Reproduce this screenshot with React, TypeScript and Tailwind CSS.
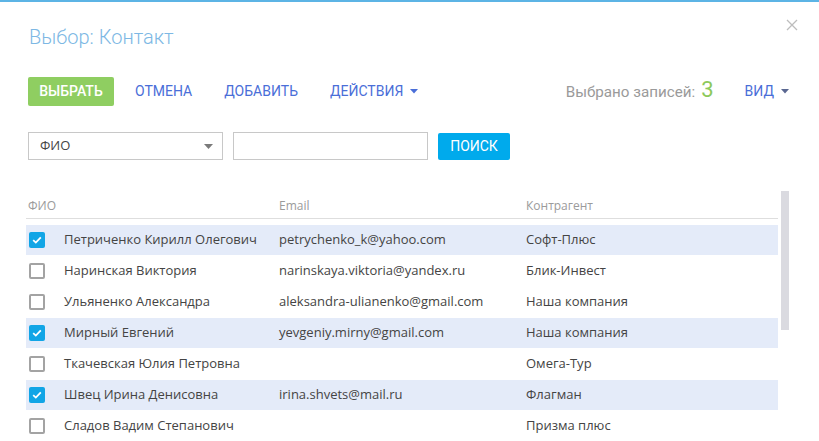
import React from "react"

type Contact = {
  name: string
  email: string
  account: string
  selected: boolean
}

const contacts: Contact[] = [
  { name: "Петриченко Кирилл Олегович", email: "petrychenko_k@yahoo.com", account: "Софт-Плюс", selected: true },
  { name: "Наринская Виктория", email: "narinskaya.viktoria@yandex.ru", account: "Блик-Инвест", selected: false },
  { name: "Ульяненко Александра", email: "aleksandra-ulianenko@gmail.com", account: "Наша компания", selected: false },
  { name: "Мирный Евгений", email: "yevgeniy.mirny@gmail.com", account: "Наша компания", selected: true },
  { name: "Ткачевская Юлия Петровна", email: "", account: "Омега-Тур", selected: false },
  { name: "Швец Ирина Денисовна", email: "irina.shvets@mail.ru", account: "Флагман", selected: true },
  { name: "Сладов Вадим Степанович", email: "", account: "Призма плюс", selected: false },
]

const Caret = ({ color }: { color: string }) => (
  <svg width="8" height="5" viewBox="0 0 8 5" className="ml-[7px]">
    <path d="M0 0 L8 0 L4 4.5 Z" fill={color} />
  </svg>
)

const Checkbox = ({ checked }: { checked: boolean }) =>
  checked ? (
    <div className="w-[16px] h-[16px] rounded-[2px] bg-[#11a5e6] flex items-center justify-center">
      <svg width="10" height="8" viewBox="0 0 10 8">
        <path d="M1.2 4.2 L3.8 6.6 L8.8 1.4" stroke="white" strokeWidth="1.8" fill="none" />
      </svg>
    </div>
  ) : (
    <div className="w-[16px] h-[16px] rounded-[2px] border-2 border-[#a3a3a3] bg-white" />
  )

const App: React.FC = () => {
  return (
    <div className="relative w-[819px] h-[441px] overflow-hidden bg-white border-t-2 border-[#5cb4e5] font-['Roboto',sans-serif]">
      <button className="absolute right-[21px] top-[17px] text-[#bdbdbd]">
        <svg width="12" height="12" viewBox="0 0 12 12">
          <path d="M1 1 L11 11 M11 1 L1 11" stroke="currentColor" strokeWidth="1.3" />
        </svg>
      </button>

      <h1 className="pl-[29px] pt-[22px] text-[20px] leading-[26px] font-light text-[#7db8e4]">Выбор: Контакт</h1>

      <div className="mt-[27px] pl-[28px] pr-[30px] flex items-center h-[29px]">
        <button className="h-[29px] w-[86px] rounded-[2px] bg-[#8fce61] text-white text-[14px] font-medium uppercase">
          Выбрать
        </button>
        <button className="ml-[21px] text-[14px] text-[#4a6ed8] uppercase">Отмена</button>
        <button className="ml-[32px] text-[14px] text-[#4a6ed8] uppercase">Добавить</button>
        <button className="ml-[32px] flex items-center text-[14px] text-[#4a6ed8] uppercase">
          Действия
          <Caret color="#4a6ed8" />
        </button>
        <div className="ml-auto flex items-baseline text-[15.2px] text-[#9a9a9a]">
          Выбрано записей:
          <span className="ml-[6px] text-[22px] leading-none text-[#8dc95b]">3</span>
        </div>
        <button className="ml-[31px] flex items-center text-[14px] text-[#4a6ed8] uppercase">
          Вид
          <Caret color="#5a6791" />
        </button>
      </div>

      <div className="mt-[26px] pl-[28px] flex items-center gap-[10px] font-['Open_Sans',sans-serif]">
        <div className="w-[195px] h-[28px] border border-[#c8c8c8] flex items-center justify-between pl-[11px] pr-[9px] text-[13px] text-[#444]">
          ФИО
          <svg width="9" height="5" viewBox="0 0 9 5">
            <path d="M0 0 L9 0 L4.5 5 Z" fill="#7a7a7a" />
          </svg>
        </div>
        <input className="w-[195px] h-[28px] border border-[#c8c8c8] outline-none px-2" />
        <button className="w-[72px] h-[27px] rounded-[2px] bg-[#00aaec] text-white text-[14px] font-['Roboto',sans-serif] uppercase">
          Поиск
        </button>
      </div>

      <div className="mt-[31px] flex font-['Open_Sans',sans-serif]">
        <div className="ml-[26px] w-[752px]">
          <div className="h-[28px] pt-[6px] grid grid-cols-[253px_247px_1fr] text-[12px] text-[#9b9b9b] border-b border-[#dedede]">
            <div className="pl-[2px]">ФИО</div>
            <div>Email</div>
            <div>Контрагент</div>
          </div>
          <div className="mt-[6px]">
            {contacts.map((c) => (
              <div
                key={c.name}
                className={`h-[30px] mb-px grid grid-cols-[38px_215px_247px_1fr] items-center text-[13px] text-[#444] ${
                  c.selected ? "bg-[#e4ebf9]" : "bg-white"
                }`}
              >
                <div className="pl-[3px]">
                  <Checkbox checked={c.selected} />
                </div>
                <div className="whitespace-nowrap">{c.name}</div>
                <div className="whitespace-nowrap">{c.email}</div>
                <div className="whitespace-nowrap">{c.account}</div>
              </div>
            ))}
          </div>
        </div>
        <div className="ml-[3px] w-[8px] h-[139px] bg-[#dadae0]" />
      </div>
    </div>
  )
}

export default App
